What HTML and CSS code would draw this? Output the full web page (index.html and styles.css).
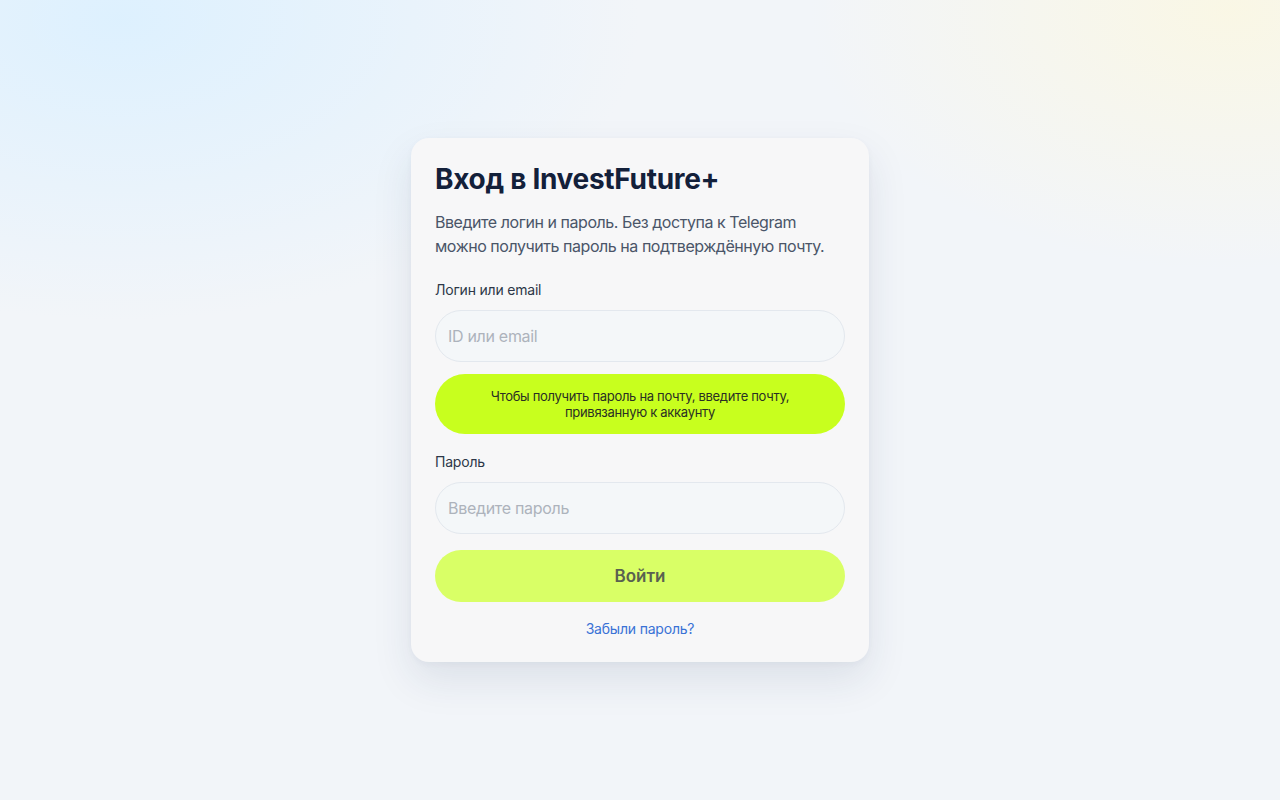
FILE: index.html
```html
<!DOCTYPE html>
<html lang="ru">
<head>
<meta charset="utf-8">
<title>Вход в InvestFuture+</title>
<link rel="stylesheet" href="styles.css">
</head>
<body>
<main class="page">
  <section class="card">
    <h1 class="title">Вход в InvestFuture+</h1>
    <p class="subtitle">Введите логин и пароль. Без доступа к Telegram можно получить пароль на подтверждённую почту.</p>
    <label class="label" for="login">Логин или email</label>
    <input class="field" id="login" type="text" placeholder="ID или email">
    <div class="hint">Чтобы получить пароль на почту, введите почту,<br>привязанную к аккаунту</div>
    <label class="label label-pass" for="pass">Пароль</label>
    <input class="field" id="pass" type="password" placeholder="Введите пароль">
    <button class="submit" type="button">Войти</button>
    <a class="forgot" href="#">Забыли пароль?</a>
  </section>
</main>
</body>
</html>
```
FILE: styles.css
```css
* { box-sizing: border-box; }
html, body { margin: 0; height: 100%; }
body {
  font-family: Inter, "Noto Sans", sans-serif;
  background:
    radial-gradient(ellipse 520px 300px at 120px 20px, rgba(219, 240, 255, 0.9), rgba(219, 240, 255, 0) 100%),
    radial-gradient(ellipse 420px 260px at 1230px 10px, rgba(250, 247, 228, 0.95), rgba(250, 247, 228, 0) 100%),
    #f2f5f9;
}
.page {
  height: 800px;
  display: flex;
  justify-content: center;
  padding-top: 138px;
}
.card {
  width: 458px;
  height: 524px;
  background: #f7f7f8;
  border-radius: 18px;
  padding: 24px 24px;
  display: flex;
  flex-direction: column;
  box-shadow: 0 18px 40px rgba(30, 50, 90, 0.10), 0 2px 6px rgba(30, 50, 90, 0.04);
}
.title {
  margin: 0 0 14px;
  font-size: 28px;
  line-height: 34px;
  font-weight: 700;
  color: #13203a;
  letter-spacing: -0.3px;
}
.subtitle {
  margin: 0 0 22px;
  font-size: 16px;
  line-height: 24px;
  color: #4a5568;
  letter-spacing: -0.45px;
}
.label {
  font-size: 14px;
  line-height: 20px;
  color: #2d3748;
  margin-bottom: 10px;
  letter-spacing: -0.2px;
}
.field {
  height: 52px;
  flex-shrink: 0;
  width: 100%;
  border-radius: 26px;
  border: 1px solid #e3e8ee;
  background: #f4f7f9;
  padding: 0 12px;
  font-family: inherit;
  font-size: 16px;
  color: #1a202c;
  outline: none;
}
.field::placeholder { color: #adb3bc; letter-spacing: -0.3px; }
.hint {
  margin-top: 12px;
  height: 60px;
  flex-shrink: 0;
  border-radius: 30px;
  background: #c8ff1e;
  display: flex;
  align-items: center;
  justify-content: center;
  text-align: center;
  font-size: 13px;
  line-height: 16px;
  color: #2a2f24;
  letter-spacing: -0.3px;
}
.label-pass { margin-top: 18px; }
.submit {
  margin-top: 16px;
  height: 52px;
  flex-shrink: 0;
  width: 100%;
  border: none;
  border-radius: 26px;
  background: #d9ff66;
  font-family: inherit;
  font-size: 17px;
  font-weight: 600;
  color: #5a6150;
  cursor: pointer;
}
.forgot {
  margin-top: 17px;
  align-self: center;
  font-size: 14px;
  line-height: 20px;
  color: #3a72d6;
  text-decoration: none;
  letter-spacing: -0.2px;
}
```
